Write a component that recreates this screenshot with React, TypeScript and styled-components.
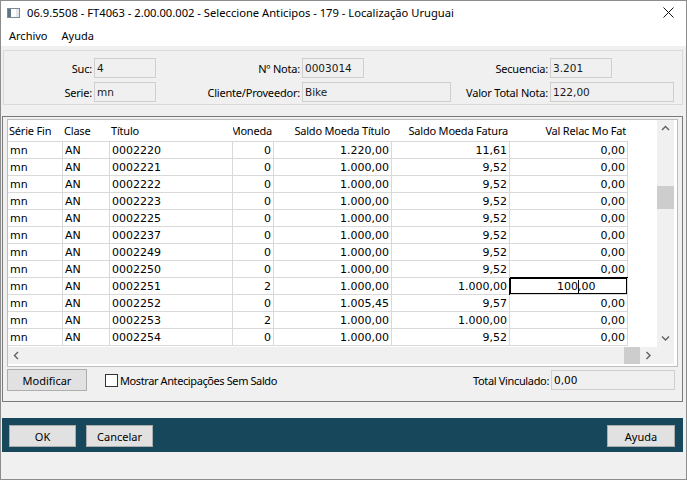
import React from 'react';
import styled, { createGlobalStyle } from 'styled-components';

const ui = `"Noto Sans", "Liberation Sans", sans-serif`;
const mono = `"DejaVu Sans", Verdana, sans-serif`;

const GlobalStyle = createGlobalStyle`
  html, body { margin:0; padding:0; background:#f0f0f0; }
  body { font-family: ${ui}; color:#000; }
  * { box-sizing: border-box; }
`;

const Window = styled.div`
  width:687px;
  height:480px;
  border:1px solid #8c8c8c;
  display:flex;
  flex-direction:column;
  background:#f0f0f0;
  overflow:hidden;
`;

const TitleBar = styled.div`
  height:23px;
  background:#fff;
  display:flex;
  align-items:center;
  padding-left:6px;
  font:11.2px ${ui};
`;

const TitleText = styled.span`
  margin-left:7px;
  flex:1;
  white-space:nowrap;
`;

const CloseBtn = styled.div`
  width:36px;
  height:23px;
  display:flex;
  align-items:center;
  justify-content:center;
`;

const MenuBar = styled.div`
  height:22px;
  background:#fff;
  display:flex;
  align-items:center;
  gap:14px;
  padding-left:8px;
  font:11px ${ui};
`;

const Content = styled.div`
  flex:1;
  display:flex;
  flex-direction:column;
  padding:0 3px 0 1px;
`;

const HeaderPanel = styled.div`
  margin:4px 0 0 1px;
  border:1px solid #d9d9d9;
  padding:7px 0 2px 0;
  display:grid;
  grid-template-columns:90px 62px 146px 62px 87px 99px 62px 62px;
  grid-auto-rows:20px;
  row-gap:4px;
`;

const Label = styled.span<{ $col: number }>`
  grid-column:${p => p.$col};
  font:11px ${ui};
  letter-spacing:-0.2px;
  text-align:right;
  padding-right:2px;
  align-self:center;
  white-space:nowrap;
`;

const ReadBox = styled.div<{ $col: number; $span?: number }>`
  grid-column:${p => p.$col} / span ${p => p.$span ?? 1};
  border:1px solid #cfcfcf;
  background:#f0f0f0;
  font:10.5px ${mono};
  display:flex;
  align-items:center;
  padding-left:2px;
  color:#1a1a1a;
`;

const Frame = styled.div`
  margin-top:11px;
  height:286px;
  border:1px solid #7a7a7a;
  padding:2px 4px 10px 4px;
  display:flex;
  flex-direction:column;
`;

const GridBox = styled.div`
  height:248px;
  border:1px solid #bdbdbd;
  background:#fff;
  padding:0 3px 2px 0;
  display:grid;
  grid-template-columns:1fr 17px;
  grid-template-rows:1fr 17px;
`;

const Sheet = styled.div`
  overflow:hidden;
  display:flex;
  flex-direction:column;
`;

const cols = '55px 47px 123px 41px 118px 118px 118px 1fr';

const Row = styled.div<{ $head?: boolean }>`
  display:grid;
  grid-template-columns:${cols};
  height:${p => (p.$head ? 22 : 17)}px;
  flex:none;
`;

const HeadCell = styled.div<{ $right?: boolean; $fill?: boolean }>`
  font:11px ${ui};
  letter-spacing:-0.2px;
  display:flex;
  align-items:center;
  justify-content:${p => (p.$right ? 'flex-end' : 'flex-start')};
  padding:0 2px 0 1px;
  overflow:hidden;
  white-space:nowrap;
  border-bottom:${p => (p.$fill ? 'none' : '1px solid #d9d9d9')};
`;

const Cell = styled.div<{ $right?: boolean; $edit?: boolean }>`
  font:11px ${mono};
  display:flex;
  align-items:center;
  justify-content:${p => (p.$right ? 'flex-end' : 'flex-start')};
  padding:0 2px 0 2px;
  overflow:hidden;
  white-space:nowrap;
  border-right:1px solid #d9d9d9;
  border-bottom:1px solid #d9d9d9;
  ${p => p.$edit && `
    box-shadow: inset 0 0 0 1px #000, -1px 0 0 #000, 0 -1px 0 #000;
    justify-content:flex-start;
    padding-left:47px;
  `}
`;

const Filler = styled.div``;

const Caret = styled.span`
  display:inline-block;
  width:1px;
  height:13px;
  background:#000;
  margin:0 -1px 0 0;
`;

const VScroll = styled.div`
  background:#f0f0f0;
  display:flex;
  flex-direction:column;
`;

const HScroll = styled.div`
  background:#f0f0f0;
  display:flex;
`;

const Corner = styled.div`
  background:#f0f0f0;
`;

const ArrowBtn = styled.div`
  width:17px;
  height:17px;
  flex:none;
  display:flex;
  align-items:center;
  justify-content:center;
`;

const Track = styled.div<{ $vertical?: boolean }>`
  flex:1;
  display:flex;
  flex-direction:${p => (p.$vertical ? 'column' : 'row')};
`;

const Thumb = styled.div<{ $vertical?: boolean }>`
  background:#cdcdcd;
  ${p => (p.$vertical ? 'width:17px;height:23px;margin-top:49px;' : 'height:17px;width:16px;margin-left:auto;')}
`;

const Controls = styled.div`
  margin-top:2px;
  height:22px;
  display:flex;
  align-items:center;
  padding-right:3px;
`;

const Button = styled.button<{ $w?: number }>`
  width:${p => p.$w ?? 67}px;
  height:22px;
  background:#e1e1e1;
  border:1px solid #adadad;
  font:11px ${ui};
  color:#000;
  padding:0;
`;

const Check = styled.span`
  width:13px;
  height:13px;
  border:1px solid #333;
  background:#fff;
  margin-left:18px;
`;

const CheckLabel = styled.span`
  margin-left:2px;
  font:11px ${ui};
  letter-spacing:-0.4px;
  flex:1;
`;

const TotalLabel = styled.span`
  font:11px ${ui};
  letter-spacing:-0.35px;
  margin-right:2px;
`;

const TotalBox = styled.div`
  width:124px;
  height:20px;
  border:1px solid #cfcfcf;
  background:#f0f0f0;
  font:10.5px ${mono};
  display:flex;
  align-items:center;
  padding-left:2px;
`;

const ActionBar = styled.div`
  margin-top:16px;
  height:34px;
  background:#17475a;
  display:flex;
  align-items:flex-start;
  padding:7px 8px 0 7px;
  gap:10px;
`;

const Spacer = styled.div`
  flex:1;
`;

const Chevron = ({ dir }: { dir: 'up' | 'down' | 'left' | 'right' }) => {
  const d = {
    up: 'M1 5 L4.5 1.5 L8 5',
    down: 'M1 1.5 L4.5 5 L8 1.5',
    left: 'M5 1 L1.5 4.5 L5 8',
    right: 'M1.5 1 L5 4.5 L1.5 8',
  }[dir];
  const vert = dir === 'up' || dir === 'down';
  return (
    <svg width={vert ? 9 : 7} height={vert ? 7 : 9} viewBox={vert ? '0 0 9 7' : '0 0 7 9'}>
      <path d={d} fill="none" stroke="#606060" strokeWidth="1.4" />
    </svg>
  );
};

const rows = [
  ['0002220', '0', '1.220,00', '11,61', '0,00'],
  ['0002221', '0', '1.000,00', '9,52', '0,00'],
  ['0002222', '0', '1.000,00', '9,52', '0,00'],
  ['0002223', '0', '1.000,00', '9,52', '0,00'],
  ['0002225', '0', '1.000,00', '9,52', '0,00'],
  ['0002237', '0', '1.000,00', '9,52', '0,00'],
  ['0002249', '0', '1.000,00', '9,52', '0,00'],
  ['0002250', '0', '1.000,00', '9,52', '0,00'],
  ['0002251', '2', '1.000,00', '1.000,00', 'EDIT'],
  ['0002252', '0', '1.005,45', '9,57', '0,00'],
  ['0002253', '2', '1.000,00', '1.000,00', '0,00'],
  ['0002254', '0', '1.000,00', '9,52', '0,00'],
];

export default function App() {
  return (
    <>
      <GlobalStyle />
      <Window>
        <TitleBar>
          <svg width="13" height="10" viewBox="0 0 13 10">
            <rect x="0.5" y="0.5" width="12" height="9" fill="#e4e8ea" stroke="#7d8b94" />
            <rect x="1" y="1" width="3" height="8" fill="#5d7482" />
            <rect x="4" y="1" width="5" height="8" fill="#ffffff" />
          </svg>
          <TitleText>06.9.5508 - FT4063 - 2.00.00.002 - Seleccione Anticipos - 179 - Localização Uruguai</TitleText>
          <CloseBtn>
            <svg width="11" height="11" viewBox="0 0 11 11">
              <path d="M0.5 0.5 L10.5 10.5 M10.5 0.5 L0.5 10.5" stroke="#111" strokeWidth="1" />
            </svg>
          </CloseBtn>
        </TitleBar>
        <MenuBar>
          <span>Archivo</span>
          <span>Ayuda</span>
        </MenuBar>
        <Content>
          <HeaderPanel>
            <Label $col={1}>Suc:</Label>
            <ReadBox $col={2}>4</ReadBox>
            <Label $col={3}>Nº Nota:</Label>
            <ReadBox $col={4}>0003014</ReadBox>
            <Label $col={6}>Secuencia:</Label>
            <ReadBox $col={7}>3.201</ReadBox>
            <Label $col={1}>Serie:</Label>
            <ReadBox $col={2}>mn</ReadBox>
            <Label $col={3}>Cliente/Proveedor:</Label>
            <ReadBox $col={4} $span={2}>Bike</ReadBox>
            <Label $col={6}>Valor Total Nota:</Label>
            <ReadBox $col={7} $span={2}>122,00</ReadBox>
          </HeaderPanel>

          <Frame>
            <GridBox>
              <Sheet>
                <Row $head>
                  <HeadCell>Série Fin</HeadCell>
                  <HeadCell>Clase</HeadCell>
                  <HeadCell>Título</HeadCell>
                  <HeadCell $right>Moneda</HeadCell>
                  <HeadCell $right>Saldo Moeda Título</HeadCell>
                  <HeadCell $right>Saldo Moeda Fatura</HeadCell>
                  <HeadCell $right>Val Relac Mo Fat</HeadCell>
                  <HeadCell $fill />
                </Row>
                {rows.map(r => (
                  <Row key={r[0]}>
                    <Cell>mn</Cell>
                    <Cell>AN</Cell>
                    <Cell>{r[0]}</Cell>
                    <Cell $right>{r[1]}</Cell>
                    <Cell $right>{r[2]}</Cell>
                    <Cell $right>{r[3]}</Cell>
                    {r[4] === 'EDIT' ? (
                      <Cell $edit>100<Caret />,00</Cell>
                    ) : (
                      <Cell $right>{r[4]}</Cell>
                    )}
                    <Filler />
                  </Row>
                ))}
              </Sheet>
              <VScroll>
                <ArrowBtn><Chevron dir="up" /></ArrowBtn>
                <Track $vertical>
                  <Thumb $vertical />
                </Track>
                <ArrowBtn><Chevron dir="down" /></ArrowBtn>
              </VScroll>
              <HScroll>
                <ArrowBtn><Chevron dir="left" /></ArrowBtn>
                <Track>
                  <Thumb />
                </Track>
                <ArrowBtn><Chevron dir="right" /></ArrowBtn>
              </HScroll>
              <Corner />
            </GridBox>
            <Controls>
              <Button $w={80}>Modificar</Button>
              <Check />
              <CheckLabel>Mostrar Antecipações Sem Saldo</CheckLabel>
              <TotalLabel>Total Vinculado:</TotalLabel>
              <TotalBox>0,00</TotalBox>
            </Controls>
          </Frame>

          <ActionBar>
            <Button>OK</Button>
            <Button>Cancelar</Button>
            <Spacer />
            <Button $w={68}>Ayuda</Button>
          </ActionBar>
        </Content>
      </Window>
    </>
  );
}
